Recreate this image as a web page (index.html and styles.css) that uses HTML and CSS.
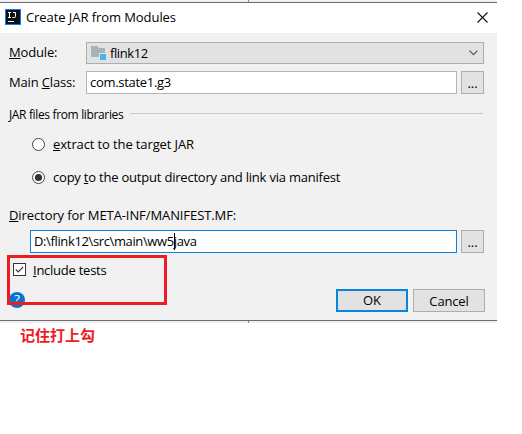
FILE: index.html
```html
<!DOCTYPE html>
<html lang="en">
<head>
<meta charset="utf-8">
<title>Create JAR from Modules</title>
<link rel="stylesheet" href="styles.css">
</head>
<body>
<main class="dialog">
  <header class="titlebar">
    <svg class="logo" width="16" height="16" viewBox="0 0 16 16"><rect width="16" height="16" fill="#087cfa"/><rect x="1" y="1" width="14" height="14" fill="#111"/><path d="M3 3.5h3M4.5 3.5v5M3 8.5h3M8 3.5h2.5v4q0 1-1 1H7.5" fill="none" stroke="#fff"/><path d="M3 12.5h6" stroke="#fff"/></svg>
    <h1 class="title">Create JAR from Modules</h1>
    <svg class="close" width="11" height="11" viewBox="0 0 11 11"><path d="M.5.5l10 10M10.5.5l-10 10" stroke="#111" stroke-width="1.1"/></svg>
  </header>
  <section class="content">
    <div class="row module">
      <label class="label t-module"><u>M</u>odule:</label>
      <div class="combo">
        <svg width="16" height="16" viewBox="0 0 16 16"><path d="M0 1h6l2 2h6v5H8v4H0z" fill="#a7b3b9"/><rect x="9" y="9" width="6" height="6" fill="#46b8e2"/></svg>
        <span class="t-flink">flink12</span>
        <svg class="chevron" width="9" height="6" viewBox="0 0 9 6"><path d="M.5.7l4 4 4-4" fill="none" stroke="#555" stroke-width="1.2"/></svg>
      </div>
    </div>
    <div class="row main-class">
      <label class="label t-class">Main <u>C</u>lass:</label>
      <div class="field t-com">com.state1.g3</div>
      <button class="browse">...</button>
    </div>
    <div class="separator"><span class="t-files">JAR files from libraries</span><i></i></div>
    <div class="radio"><svg width="14" height="14" viewBox="0 0 14 14"><circle cx="6.5" cy="6.5" r="6" fill="#fff" stroke="#444"/></svg><span class="t-extract"><u>e</u>xtract to the target JAR</span></div>
    <div class="radio"><svg width="14" height="14" viewBox="0 0 14 14"><circle cx="6.5" cy="6.5" r="6" fill="#fff" stroke="#444"/><circle cx="6.5" cy="6.5" r="3.6" fill="#333"/></svg><span class="t-copy">copy <u>t</u>o the output directory and link via manifest</span></div>
    <div class="directory t-directory"><u>D</u>irectory for META-INF/MANIFEST.MF:</div>
    <div class="row path">
      <div class="field focused t-path">D:\flink12\src\main\ww5<b class="caret"></b>java</div>
      <button class="browse">...</button>
    </div>
    <div class="check"><svg width="13" height="13" viewBox="0 0 13 13"><rect x=".5" y=".5" width="12" height="12" fill="#fff" stroke="#333"/><path d="M2.7 6.3l2.5 2.5 5-5" fill="none" stroke="#333" stroke-width="1.2"/></svg><span class="t-include"><u>I</u>nclude tests</span></div>
    <footer class="footer">
      <span class="help">?</span>
      <button class="action primary">OK</button>
      <button class="action">Cancel</button>
    </footer>
  </section>
  <div class="highlight"></div>
  <i class="tick top"></i><i class="tick bottom"></i>
</main>
<p class="note">记住打上勾</p>
</body>
</html>
```
FILE: styles.css
```css
* { box-sizing: border-box; }
body { margin: 0; width: 522px; height: 434px; overflow: hidden; background: #fff; color: #000; font: 13px/20px "Open Sans", "Noto Sans CJK SC", sans-serif; }
.dialog { position: relative; width: 497px; height: 323px; padding-top: 2px; background: #f1f1f1; }
.titlebar { height: 31px; border-top: 1px solid #6e6e6e; background: #fff; display: flex; align-items: center; padding: 0 9px 2px 5px; }
.title { margin: 0 auto 0 5px; font-size: 13px; font-weight: 400; white-space: nowrap; letter-spacing: -.07px; }
.content { height: 288px; border-bottom: 1px solid #6e6e6e; padding-top: 9px; }
.row { display: flex; padding: 0 13px 0 9px; }
.label { width: 77px; white-space: nowrap; }
u { text-decoration-thickness: 1px; text-underline-offset: 1px; }
.combo { flex: 1; height: 22px; border: 1px solid #adadad; background: #e2e2e2; display: flex; align-items: center; gap: 4px; padding: 0 5px 0 4px; }
.combo span { margin-left: -1px; margin-right: auto; }
.main-class { margin-top: 7px; }
.main-class .label { padding-top: 1px; }
.field { flex: 1; height: 23px; border: 1px solid #b5b5b5; background: #fff; padding: 0 0 0 3px; line-height: 21px; white-space: nowrap; }
.browse { width: 23px; height: 23px; margin-left: 4px; border: 1px solid #adadad; background: #e2e2e2; padding: 0; font: 13px/20px "Open Sans", sans-serif; color: #000; }
.separator { height: 20px; margin-top: 11px; padding: 0 14px 0 9px; display: flex; font-size: 12px; white-space: nowrap; }
.separator span { width: 121px; }
.separator i { flex: 1; height: 1px; margin-top: 8px; background: #c9c9c9; }
.radio { display: flex; align-items: center; height: 20px; margin: 10px 0 0 32px; gap: 7px; white-space: nowrap; }
.radio span { padding-bottom: 2px; }
.radio + .radio { margin-top: 13px; }
.directory { margin: 18px 0 0 9px; height: 20px; line-height: 19px; white-space: nowrap; }
.path { padding-left: 30px; margin-top: 4px; }
.focused { border-color: #0a84de; }
.caret { display: inline-block; width: 1px; height: 17px; margin-right: -1px; background: #000; vertical-align: -4px; }
.check { display: flex; align-items: center; height: 19px; margin: 7px 0 0 13px; gap: 7px; white-space: nowrap; }
.footer { display: flex; margin: 10px 12px 0 9px; }
.help { width: 16px; height: 16px; border-radius: 50%; margin: 3px auto 0 0; background: #0a73cf; color: #fff; text-align: center; line-height: 15px; }
.action { width: 72px; height: 23px; margin-left: 5px; border: 1px solid #adadad; background: #e2e2e2; padding: 0; font: 13px/20px "Open Sans", sans-serif; letter-spacing: -.15px; color: #000; }
.primary { border: 2px solid #0a84de; line-height: 19px; }
.t-module, .t-class { letter-spacing: -.16px; }
.t-flink { letter-spacing: -.4px; }
.t-com { letter-spacing: -.3px; }
.t-files { letter-spacing: -.35px; }
.t-extract { letter-spacing: -.12px; }
.t-copy { letter-spacing: -.21px; }
.t-directory { letter-spacing: -.09px; }
.t-path { letter-spacing: -.37px; }
.t-include { letter-spacing: -.25px; }
.highlight { position: absolute; left: 7px; top: 255px; width: 160px; height: 50px; border: 3px solid #ee1c25; }
.tick { position: absolute; left: 248px; width: 1px; height: 2px; background: #888; }
.top { top: 0; }
.bottom { top: 321px; }
.note { margin: 0 0 0 20px; color: #ee1c25; font: bold 15px/24px "Noto Sans CJK SC", sans-serif; }
```
